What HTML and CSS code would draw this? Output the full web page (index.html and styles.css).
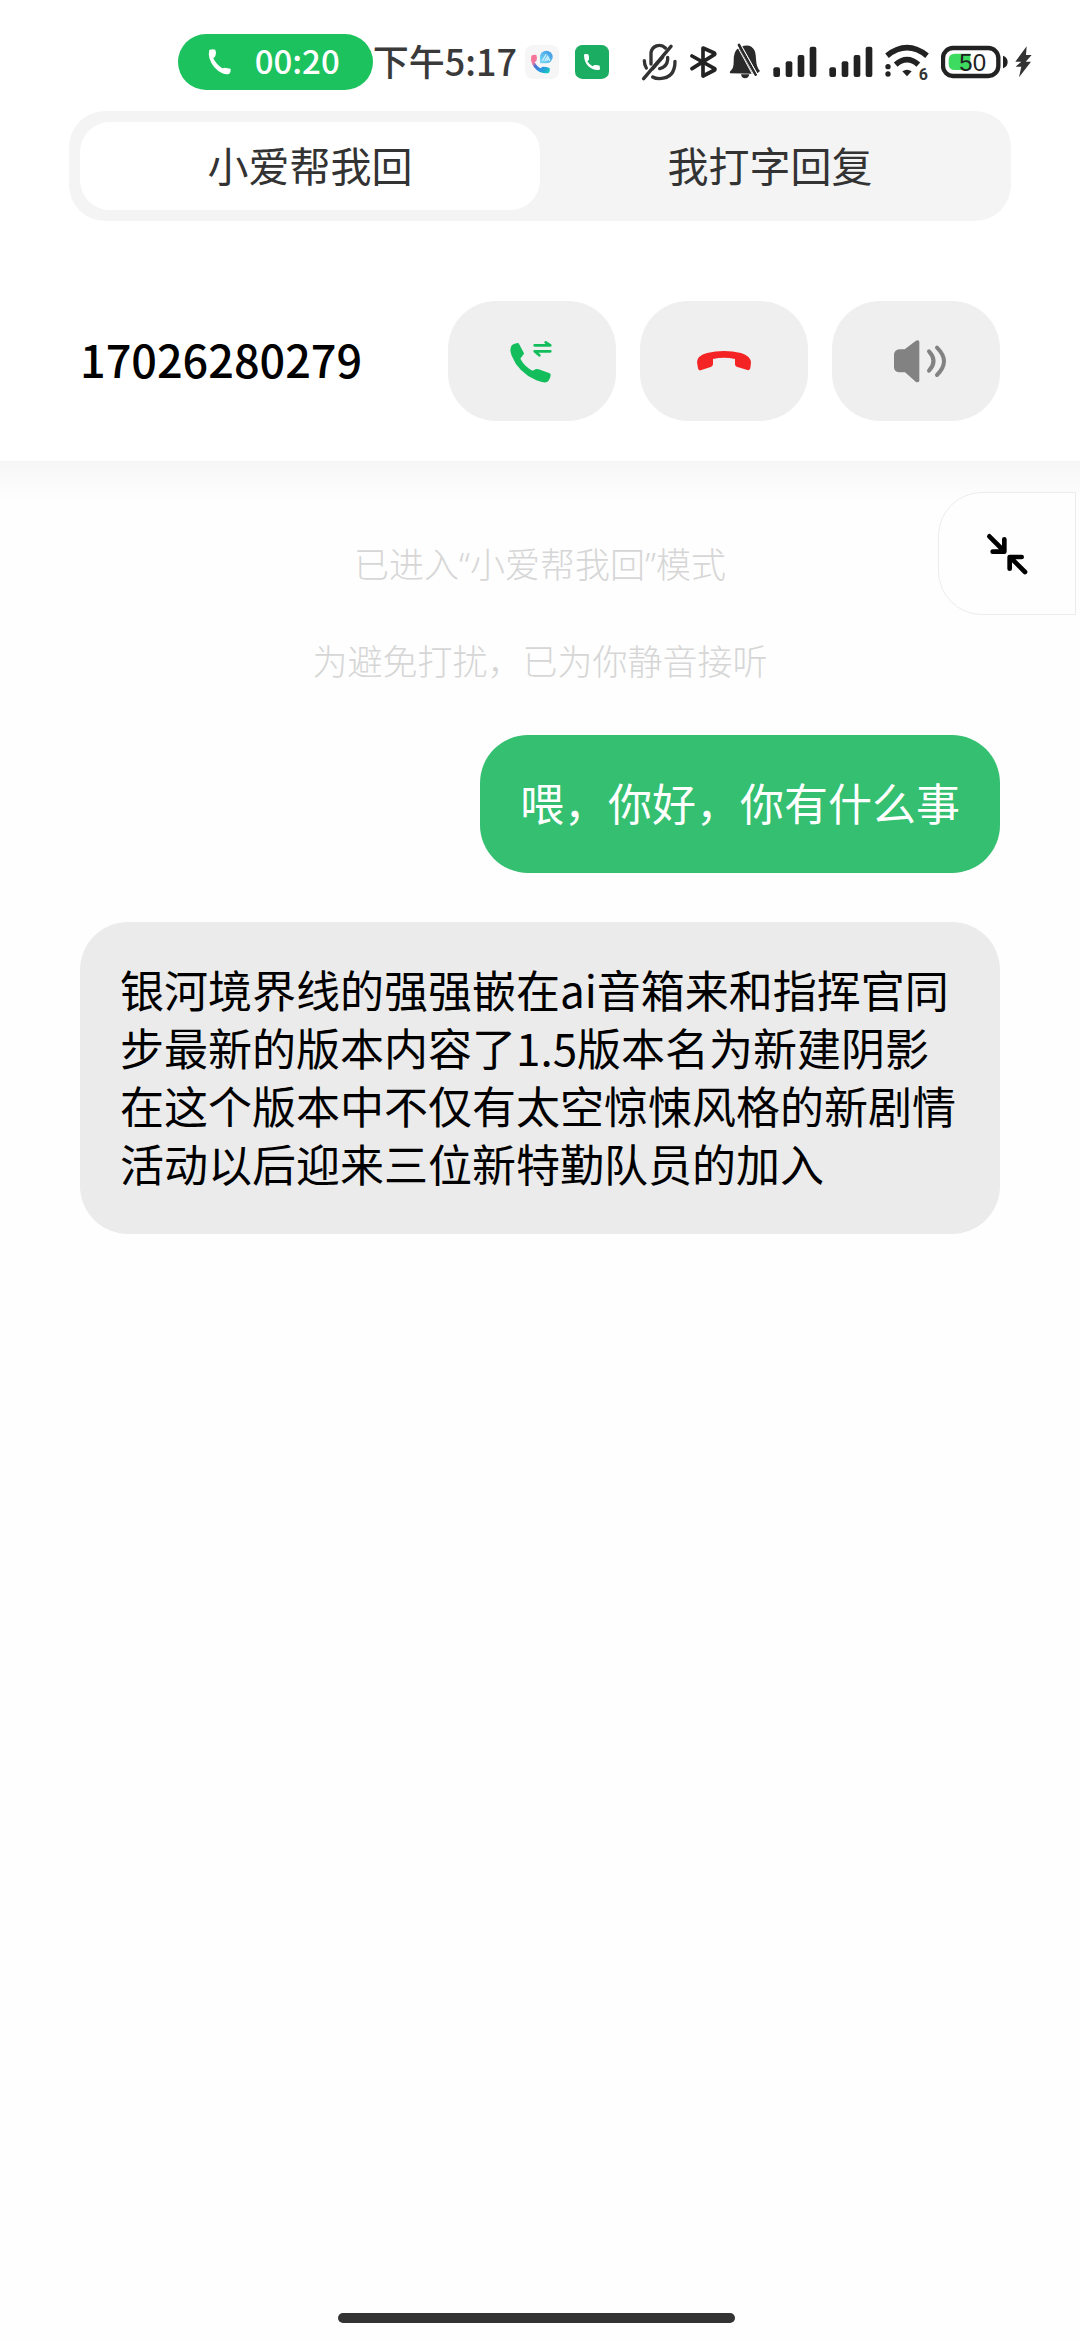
FILE: index.html
```html
<!DOCTYPE html>
<html lang="zh-CN">
<head>
<meta charset="utf-8">
<meta name="viewport" content="width=device-width, initial-scale=1">
<title>小爱帮我回</title>
<link rel="stylesheet" href="styles.css">
</head>
<body>
<div class="screen">
  <header class="top">
    <div class="status">
      <div class="call-pill">
        <svg width="24" height="28" viewBox="138 84 72 84" aria-hidden="true"><path fill="#fff" d="M145 90 Q154 86 163 89 Q167 98 163 109 L157 115 Q166 134 184 145 L191 143 Q199 145 209 146 Q210 155 205 161 Q197 165 184 160 Q155 146 145 114 Q142 100 145 90Z"/></svg>
        <span>00:20</span>
      </div>
      <time class="clock">下午5:17</time>
      <div class="apps">
        <svg width="34" height="34" viewBox="12 14 102 102" aria-hidden="true">
          <defs>
            <linearGradient id="hs" x1="0" y1="0" x2="1" y2="1"><stop offset="0" stop-color="#ff6f91"/><stop offset=".28" stop-color="#f07aa0"/><stop offset=".42" stop-color="#4a72d8"/><stop offset=".7" stop-color="#2a9be0"/><stop offset="1" stop-color="#12d3b4"/></linearGradient>
            <linearGradient id="bb" x1="0" y1="1" x2="1" y2="0"><stop offset="0" stop-color="#7fdcf5"/><stop offset="1" stop-color="#3793e4"/></linearGradient>
          </defs>
          <rect x="12" y="14" width="102" height="102" rx="24" fill="#f6f6f7"/>
          <path fill="url(#hs)" d="M31 46 Q39 42 46 44 Q50 52 46 62 L41 66 Q47 78 58 84 L65 79 Q76 79 86 83 Q88 92 83 98 Q70 100 56 95 Q35 84 30 60Z"/>
          <path fill="url(#bb)" d="M57 69 V50 A19 19 0 1 1 76 69Z"/>
          <path d="M65 60 L75 43 M72 61 L80 48 L86 60 M78 60 L82 53" fill="none" stroke="#c9f0ff" stroke-width="4" stroke-linecap="round"/>
        </svg>
        <svg width="34" height="34" viewBox="162 14 102 102" aria-hidden="true"><rect x="162" y="14" width="102" height="102" rx="22" fill="#1bad62"/><path fill="#fff" d="M189 44 Q189 41 193 41 L202 42 Q205 50 204 58 L199 63 Q205 73 215 78 L220 74 Q229 73 236 76 L237 86 Q237 89 232 89 Q215 90 202 78 Q189 64 189 44Z"/></svg>
      </div>
      <div class="signals">
        <svg width="37" height="38" viewBox="388 69 111 114" aria-hidden="true"><g fill="none" stroke="#333" stroke-width="10" stroke-linecap="round"><path d="M418 132 V99 A25 25 0 0 1 461 84"/><path d="M468 112 V119 Q466 141 444 146"/><path d="M398 122 Q398 134 404 144"/><path d="M490 124 Q490 175 444 176 Q431 176 423 171"/><path d="M478 79 L396 176"/><path d="M455 112 L424 148" stroke-width="6"/></g></svg>
        <svg width="27" height="38" viewBox="537 69 81 114" aria-hidden="true"><path d="M543 108 L611 146 Q613 148 611 150 L576 168 V84 L610 99 Q613 102 610 104 L543 146" fill="none" stroke="#232323" stroke-width="11" stroke-linecap="round" stroke-linejoin="round"/></svg>
        <svg width="32" height="38" viewBox="654 69 96 114" aria-hidden="true"><path fill="#2a2a2a" d="M657 160 Q654 155 661 150 Q668 143 668 125 Q667 92 684 83 L725 161Z M692 79 Q720 70 731 92 Q734 99 735 117 Q736 142 747 153 L739 160Z M690 163 H715 Q713 175 702 175 Q692 175 690 163Z"/><path d="M684 75 L734 164" stroke="#2a2a2a" stroke-width="8" stroke-linecap="round"/><path d="M679 79 L727 168 M690 74 L742 168" stroke="#fff" stroke-width="3"/></svg>
        <svg width="44" height="38" viewBox="36 69 132 114" aria-hidden="true"><g fill="#222"><rect x="37" y="142" width="20" height="29" rx="6"/><rect x="74" y="124" width="20" height="47" rx="6"/><rect x="110" y="105" width="20" height="66" rx="6"/><rect x="146" y="80" width="20" height="91" rx="6"/></g></svg>
        <svg width="44" height="38" viewBox="36 69 132 114" aria-hidden="true"><g fill="#222"><rect x="37" y="142" width="20" height="29" rx="6"/><rect x="74" y="124" width="20" height="47" rx="6"/><rect x="110" y="105" width="20" height="66" rx="6"/><rect x="146" y="80" width="20" height="91" rx="6"/></g></svg>
        <svg class="wifi" width="44" height="38" viewBox="372 69 132 114" aria-label="Wi-Fi 6"><path d="M378 107 Q438 59 498 107" fill="none" stroke="#222" stroke-width="17"/><path d="M404 134 Q438 104 472 134" fill="none" stroke="#222" stroke-width="17"/><path d="M424 154 Q438 144 452 154 L438 169Z" fill="#222"/><circle cx="381" cy="140" r="8" fill="#222"/><circle cx="381" cy="162" r="8" fill="#222"/><text class="wifi-gen" x="473" y="180">6</text></svg>
        <div class="power">
          <svg width="67" height="38" viewBox="540 69 201 114" aria-label="50%"><rect x="546" y="84" width="166" height="84" rx="30" fill="#fff" stroke="#222" stroke-width="13"/><path d="M582 101 H628 V150 H582 Q563 150 563 131 V120 Q563 101 582 101Z" fill="#3ddc60"/><path d="M726 107 Q740 112 740 126 Q740 140 726 145Z" fill="#222"/><text class="battery-value" x="595" y="152">50</text></svg>
          <svg width="18" height="38" viewBox="759 69 54 114" aria-hidden="true"><path fill="#333" d="M797 79 L763 125 H781 L764 140 H781 L774 172 L810 125 H794 L812 105 H795Z"/></svg>
        </div>
      </div>
    </div>

    <div class="tabs" role="tablist">
      <button class="tab tab-active" role="tab" aria-selected="true">小爱帮我回</button>
      <button class="tab" role="tab" aria-selected="false">我打字回复</button>
    </div>

    <div class="caller">
      <h1 class="number">17026280279</h1>
      <div class="actions">
        <button class="action" aria-label="切换通话">
          <svg width="60" height="60" viewBox="0 0 180 180"><path fill="#14bd5b" d="M30 42 Q37 37 47 36 L50 37 L66 67 Q66 70 55 83 Q68 107 92 119 L102 114 Q106 113 110 115 L143 127 Q147 130 146 134 Q142 149 135 153 Q125 157 103 148 Q49 124 29 74 Q21 54 30 42Z"/><path d="M98 43 H145 L131 34 M145 61 H98 L112 73" fill="none" stroke="#14bd5b" stroke-width="8" stroke-linecap="round" stroke-linejoin="round"/></svg>
        </button>
        <button class="action" aria-label="挂断">
          <svg width="60" height="60" viewBox="219 152 180 180"><path fill="#f42424" d="M228 245 Q229 226 258 218 Q309 206 360 218 Q389 227 390 247 L388 264 Q386 271 379 269 L347 259 Q342 258 342 252 V236 Q309 228 276 236 V252 Q275 258 269 260 L239 270 Q232 271 231 264Z"/></svg>
        </button>
        <button class="action" aria-label="扬声器">
          <svg width="60" height="60" viewBox="798 152 180 180"><path fill="#828282" d="M822 222 Q824 208 838 207 H854 L888 181 Q895 178 898 184 V302 Q895 308 888 305 L855 276 H838 Q824 275 822 262Z"/><path d="M927 213 Q954 242 927 271 M951 202 Q993 243 951 284" fill="none" stroke="#828282" stroke-width="12" stroke-linecap="round"/></svg>
        </button>
      </div>
    </div>
  </header>

  <main class="chat">
    <button class="collapse" aria-label="收起">
      <svg width="60" height="60" viewBox="1071 729 180 180"><g fill="none" stroke="#000" stroke-width="14" stroke-linecap="round" stroke-linejoin="round"><path d="M1108 766 L1152 810 M1153 775 V812 H1118"/><path d="M1215 873 L1171 829 M1205 828 H1169 V863"/></g></svg>
    </button>
    <p class="hint">已进入“小爱帮我回”模式</p>
    <p class="hint">为避免打扰，已为你静音接听</p>
    <p class="bubble bubble-out">喂，你好，你有什么事</p>
    <p class="bubble bubble-in">银河境界线的强强嵌在ai音箱来和指挥官同步最新的版本内容了1.5版本名为新建阴影在这个版本中不仅有太空惊悚风格的新剧情活动以后迎来三位新特勤队员的加入</p>
  </main>

  <footer class="nav"><div class="nav-handle"></div></footer>
</div>
</body>
</html>
```
FILE: styles.css
```css
* {
  box-sizing: border-box;
}

body {
  margin: 0;
  background: #fefefe;
  color: #000;
  font-family: "Noto Sans CJK SC", sans-serif;
}

button {
  border: 0;
  padding: 0;
  font: inherit;
  color: inherit;
}

svg {
  display: block;
  flex: none;
}

.screen {
  display: flex;
  flex-direction: column;
  min-height: 100vh;
}

.top {
  padding: 34px 0 40px;
  background: #fff;
}

/* status bar */
.status {
  display: flex;
  align-items: center;
  justify-content: flex-end;
  height: 56px;
  padding-right: 48px;
  white-space: nowrap;
}

.call-pill {
  display: flex;
  align-items: center;
  gap: 24px;
  height: 56px;
  padding: 0 33px 0 29px;
  border-radius: 28px;
  background: #1cc25e;
  color: #fff;
  font-size: 33px;
  line-height: 54px;
  font-weight: 500;
}

.call-pill span,
.clock {
  padding-bottom: 4px;
}

.clock {
  color: #3a3a3a;
  font-size: 36px;
  line-height: 54px;
  font-weight: 500;
}

.apps {
  display: flex;
  gap: 16px;
  margin-left: 8px;
}

.signals {
  display: flex;
  gap: 12px;
  margin-left: 32px;
}

.wifi {
  overflow: visible;
}

.power {
  display: flex;
  gap: 6px;
}

.wifi-gen {
  font: bold 48px Roboto, sans-serif;
  fill: #333;
}

.battery-value {
  font: 72px "Liberation Sans", sans-serif;
  fill: #222;
}

/* reply mode switch */
.tabs {
  display: flex;
  margin: 21px 69px 0;
  padding: 11px;
  border-radius: 36px;
  background: #f4f4f4;
}

.tab {
  flex: 1;
  height: 88px;
  padding-bottom: 4px;
  border-radius: 30px;
  background: transparent;
  color: #333;
  font-size: 41px;
  line-height: 84px;
}

.tab-active {
  background: #fff;
}

/* caller and call controls */
.caller {
  display: flex;
  align-items: center;
  justify-content: space-between;
  margin-top: 80px;
  padding: 0 80px;
}

.number {
  margin: 0;
  padding-bottom: 4px;
  font-size: 45px;
  line-height: 60px;
  font-weight: 500;
}

.actions {
  display: flex;
  gap: 24px;
}

.action {
  display: flex;
  align-items: center;
  justify-content: center;
  width: 168px;
  height: 120px;
  border-radius: 48px;
  background: #efefef;
}

/* conversation */
.chat {
  position: relative;
  flex: 1;
  display: flex;
  flex-direction: column;
  gap: 49px;
  padding: 80px 80px 40px;
  background: linear-gradient(#f6f6f6, #fefefe 40px);
}

.collapse {
  position: absolute;
  top: 31px;
  right: 4px;
  display: flex;
  align-items: center;
  justify-content: center;
  width: 138px;
  height: 123px;
  border: 1px solid #ececec;
  border-radius: 44px 0 0 44px;
  background: #fefefe;
}

.hint {
  margin: 0;
  color: #d6d6d6;
  font-family: "Noto Sans", "Noto Sans CJK SC", sans-serif;
  font-size: 35px;
  line-height: 48px;
  font-weight: 300;
  text-align: center;
}

.bubble {
  margin: 0;
  padding: 38px 40px 42px;
  border-radius: 48px;
  font-size: 44px;
  line-height: 58px;
}

.bubble-out {
  align-self: flex-end;
  background: #34bf71;
  color: #fff;
}

.bubble-in {
  align-self: flex-start;
  background: #ebebeb;
}

/* gesture bar */
.nav {
  display: flex;
  justify-content: center;
  padding: 0 7px 17px 0;
}

.nav-handle {
  width: 37%;
  height: 10px;
  border-radius: 5px;
  background: #333;
}
```
